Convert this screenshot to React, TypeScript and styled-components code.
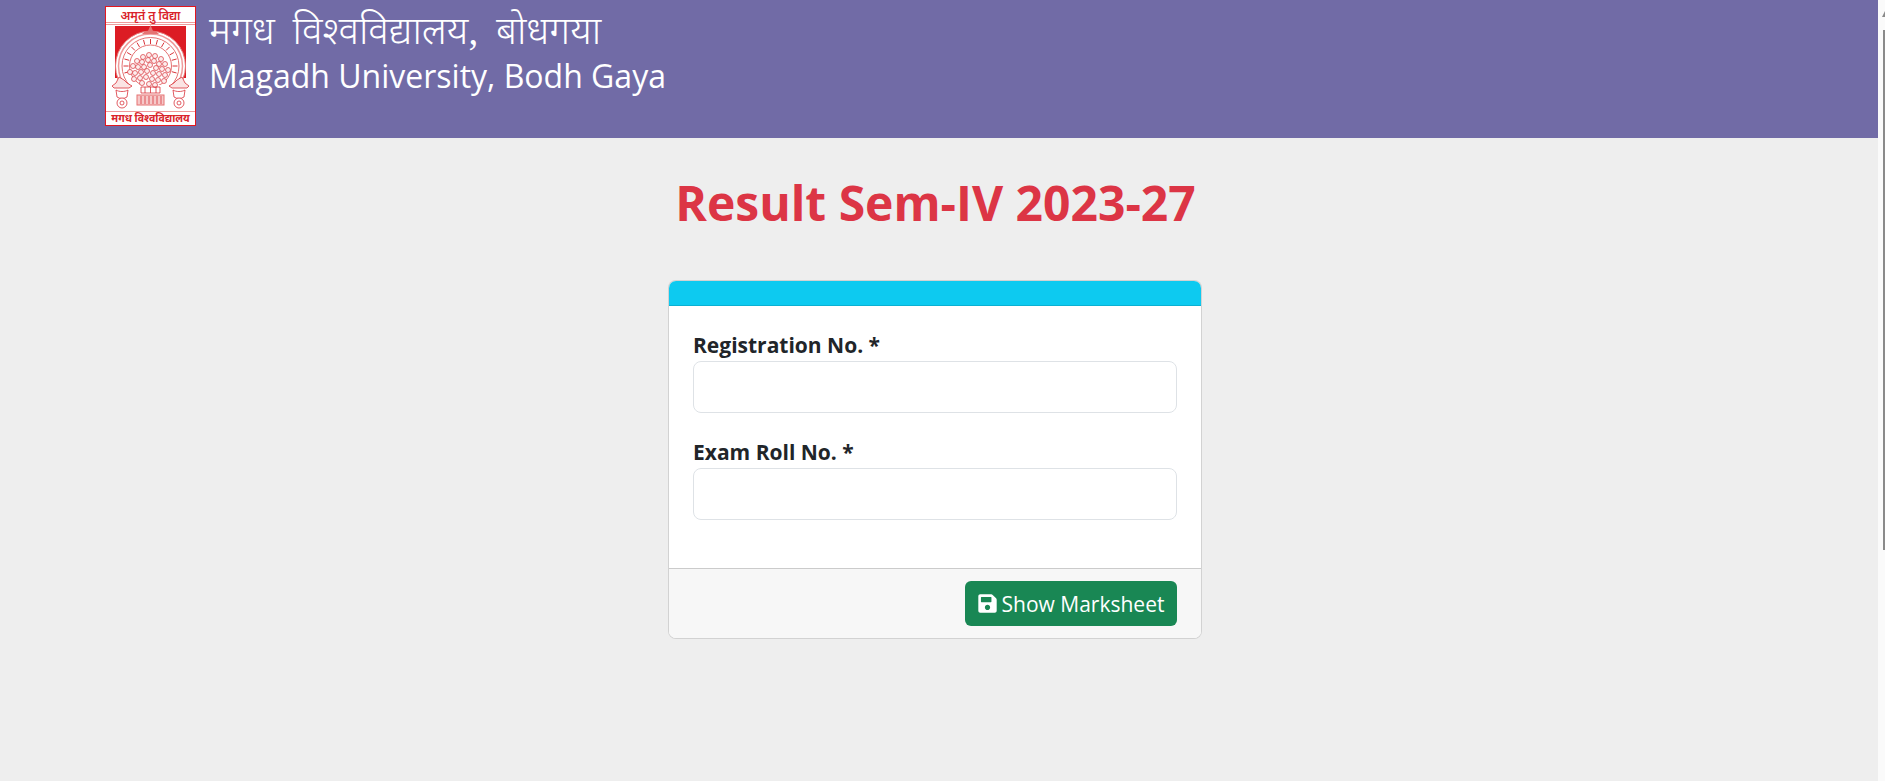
import React from "react";
import styled, { createGlobalStyle } from "styled-components";
import { FaSave } from "react-icons/fa";

const GlobalStyle = createGlobalStyle`
  html, body {
    margin: 0;
    padding: 0;
    height: 100%;
    overflow: hidden;
    background-color: #eeeeee;
    font-family: "Open Sans", "Noto Sans", sans-serif;
  }
  * {
    box-sizing: border-box;
  }
`;

const SPage = styled.div`
  display: flex;
  height: 781px;
`;

const SMain = styled.div`
  flex: 1;
  min-width: 0;
`;

const SScrollTrack = styled.div`
  width: 7px;
  background-color: #fafafa;
  display: flex;
  flex-direction: column;
  align-items: flex-end;
  padding-top: 11px;
`;

const SScrollArrow = styled.div`
  width: 0;
  height: 0;
  border-left: 3px solid transparent;
  border-bottom: 6px solid #8a8a8a;
`;

const SScrollThumb = styled.div`
  width: 2px;
  margin-top: 13px;
  height: 520px;
  background-color: #8a8a8a;
`;

const SHeader = styled.header`
  height: 138px;
  background-color: #716ba6;
  padding: 6px 0 0 105px;
  display: flex;
  align-items: flex-start;
  gap: 13px;
`;

const SBrand = styled.div`
  color: #fff;
  padding-top: 5px;
`;

const SHindiName = styled.div`
  font-family: "Liberation Serif", "Noto Sans", serif;
  font-size: 39px;
  line-height: 40px;
  font-weight: 300;
  word-spacing: 8px;
`;

const SEnglishName = styled.div`
  font-size: 32px;
  line-height: 42px;
  margin-top: 4px;
`;

const SContent = styled.div`
  padding-right: 7px;
`;

const STitle = styled.h1`
  margin: 36px 0 0;
  font-size: 48px;
  line-height: 58px;
  font-weight: 700;
  color: #dc3545;
  text-align: center;
`;

const SCard = styled.form`
  width: 534px;
  margin: 48px 0 0 668px;
  background-color: #fff;
  border: 1px solid rgba(0, 0, 0, 0.175);
  border-radius: 8px;
  overflow: hidden;
`;

const SCardTop = styled.div`
  height: 25px;
  background-color: #0dcaf0;
  border-bottom: 1px solid rgba(0, 0, 0, 0.125);
`;

const SCardBody = styled.div`
  padding: 25px 24px 48px 24px;
  display: flex;
  flex-direction: column;
  gap: 25px;
`;

const SField = styled.div`
  display: flex;
  flex-direction: column;
`;

const SLabel = styled.label`
  font-size: 21px;
  line-height: 28px;
  font-weight: 700;
  color: #212529;
  margin-bottom: 2px;
`;

const SInput = styled.input`
  height: 52px;
  width: 100%;
  padding: 6px 12px;
  background-color: #fff;
  border: 1px solid #dee2e6;
  border-radius: 8px;
  outline: none;
  font-family: inherit;
  font-size: 21px;
`;

const SCardFooter = styled.div`
  height: 70px;
  padding: 12px 24px 0 0;
  background-color: #f7f7f7;
  border-top: 1px solid rgba(0, 0, 0, 0.175);
  display: flex;
  justify-content: flex-end;
  align-items: flex-start;
`;

const SButton = styled.button`
  height: 45px;
  width: 212px;
  padding: 0;
  display: flex;
  align-items: center;
  justify-content: center;
  gap: 5px;
  color: #fff;
  background-color: #198754;
  border: none;
  border-radius: 6px;
  font-family: inherit;
  font-size: 21px;

  svg {
    width: 19px;
    height: 21px;
  }
`;

const LEAVES = [
  [38, 51], [44, 49], [50, 50], [56, 53], [32, 55], [37, 56], [43, 54], [49, 55], [54, 58], [60, 58],
  [28, 60], [33, 61], [39, 61], [45, 59], [51, 62], [57, 63], [63, 64], [25, 66], [30, 67], [36, 66],
  [42, 65], [48, 67], [54, 68], [60, 69], [29, 73], [35, 72], [41, 71], [47, 73], [53, 74], [59, 75],
  [37, 77], [44, 78], [50, 79],
];

const EmblemRays = () => {
  // ring of small rays around the inner arch
  const rays = [];
  for (let a = -195; a <= 15; a += 15) {
    const r = (a * Math.PI) / 180;
    rays.push(
      <line
        key={a}
        x1={45.5 + 22 * Math.cos(r)}
        y1={60 + 22 * Math.sin(r)}
        x2={45.5 + 27 * Math.cos(r)}
        y2={60 + 27 * Math.sin(r)}
      />,
    );
  }
  return <g stroke="#d9343b" strokeWidth="1">{rays}</g>;
};

const LogoEmblem = () => (
  <svg width="91" height="120" viewBox="0 0 91 120" style={{ flexShrink: 0 }}>
    <rect x="0.5" y="0.5" width="90" height="119" fill="#fff" stroke="#e3171f" />
    <path d="M1 16.500h89M1 18.500h89M1 105.500h89" stroke="#ef9a9a" strokeWidth="1" fill="none" />
    <text x="45.500" y="13.500" textAnchor="middle" fontSize="12" fontWeight="600" fill="#d9232a" fontFamily="'Noto Sans', sans-serif">अमृतं तु विद्या</text>
    <text x="45.500" y="116" textAnchor="middle" fontSize="10.500" fontWeight="700" fill="#d9232a" fontFamily="'Noto Sans', sans-serif">मगध विश्वविद्यालय</text>
    <rect x="10" y="20" width="71" height="52" fill="#dc1c24" />
    <circle cx="45.500" cy="60" r="35" fill="#fff" stroke="#e57373" />
    <circle cx="45.500" cy="60" r="32" fill="none" stroke="#ef9a9a" strokeWidth="1.500" />
    <circle cx="45.500" cy="60" r="28.500" fill="none" stroke="#e57373" strokeWidth="1" />
    <EmblemRays />
    <circle cx="45.500" cy="60" r="21" fill="#fff" stroke="#e57373" />
    <path d="M37 28h17l-3-3h-3l-2.500-6-2.500 6h-3z" fill="#e57373" />
    <path d="M0.500 79h90v26h-90z" fill="#fff" stroke="none" />
    <path d="M0.500 79v26M90.500 79v26" stroke="#e3171f" fill="none" />
    <g fill="#fdeeee" stroke="#d9343b" strokeWidth="0.700">
      {LEAVES.map(([x, y]) => (
        <circle key={`${x}-${y}`} cx={x} cy={y} r="2.500" />
      ))}
    </g>
    <path d="M36 81h19v6H36zM40 81v6M45.500 81v6M51 81v6" fill="none" stroke="#d9343b" strokeWidth="0.800" />
    <rect x="32" y="89" width="27" height="10" fill="#f6c9c9" stroke="#e57373" />
    <path d="M36 90v8M40 90v8M44 90v8M48 90v8M52 90v8M56 90v8" stroke="#d9343b" strokeWidth="0.800" />
    <g fill="#fff" stroke="#d9343b" strokeWidth="0.800">
      <path d="M7 80l4-3 3-6 5 3 3 3 5 3-3 2H9z" fill="#fbe4e4" />
      <path d="M84 80l-4-3-3-6-5 3-3 3-5 3 3 2h15z" fill="#fbe4e4" />
      <path d="M11 84c3 2 9 2 12 0l-1 7c-3 2-7 2-10 0z" />
      <path d="M68 84c3 2 9 2 12 0l-1 7c-3 2-7 2-10 0z" />
      <circle cx="17" cy="97" r="5" />
      <circle cx="17" cy="97" r="2" />
      <circle cx="74" cy="97" r="5" />
      <circle cx="74" cy="97" r="2" />
    </g>
  </svg>
);

const App = () => (
  <SPage>
    <GlobalStyle />
    <SMain>
      <SHeader>
        <LogoEmblem />
        <SBrand>
          <SHindiName>मगध विश्वविद्यालय, बोधगया</SHindiName>
          <SEnglishName>Magadh University, Bodh Gaya</SEnglishName>
        </SBrand>
      </SHeader>
      <SContent>
        <STitle>Result Sem-IV 2023-27</STitle>
      </SContent>
      <SCard>
        <SCardTop />
        <SCardBody>
          <SField>
            <SLabel htmlFor="reg">Registration No. *</SLabel>
            <SInput id="reg" type="text" />
          </SField>
          <SField>
            <SLabel htmlFor="roll">Exam Roll No. *</SLabel>
            <SInput id="roll" type="text" />
          </SField>
        </SCardBody>
        <SCardFooter>
          <SButton type="button">
            <FaSave />
            Show Marksheet
          </SButton>
        </SCardFooter>
      </SCard>
    </SMain>
    <SScrollTrack>
      <SScrollArrow />
      <SScrollThumb />
    </SScrollTrack>
  </SPage>
);

export default App;
